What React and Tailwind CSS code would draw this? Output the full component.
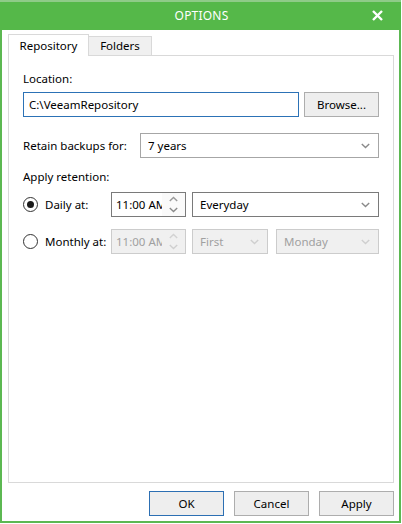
import React from "react";

const Chevron = ({ disabled }) => (
  <svg width="9" height="6" viewBox="0 0 9 6" className="shrink-0">
    <path d="M0.8 1l3.7 3.6L8.2 1" fill="none" stroke={disabled ? "#cfcfcf" : "#8a8a8a"} strokeWidth="1.4" />
  </svg>
);

const Up = ({ disabled }) => (
  <svg width="9" height="6" viewBox="0 0 9 6">
    <path d="M0.8 5l3.7-3.6L8.2 5" fill="none" stroke={disabled ? "#d2d2d2" : "#9a9a9a"} strokeWidth="1.4" />
  </svg>
);

function Select({ text, w, disabled, dark }) {
  return (
    <div
      className={`h-[25px] ${w} flex items-center justify-between pl-[7px] pr-[8px] border ${
        disabled ? "bg-[#f0f0f0] border-[#cccccc] text-[#a0a0a0]" : dark ? "bg-white border-[#7a7a7a] text-black" : "bg-white border-[#a6a6a6] text-black"
      }`}
    >
      <span>{text}</span>
      <Chevron disabled={disabled} />
    </div>
  );
}

function TimeBox({ disabled }) {
  return (
    <div
      className={`h-[25px] w-[75px] flex border ${
        disabled ? "bg-[#f0f0f0] border-[#cccccc] text-[#a0a0a0]" : "bg-white border-[#7a7a7a] text-black"
      }`}
    >
      <div className="w-[50px] overflow-hidden whitespace-nowrap pl-[4px] flex items-center">11:00 AM</div>
      <div className={`flex-1 flex flex-col items-center justify-center ${disabled ? "" : "bg-[#fafafa]"}`}>
        <div className="h-[11px] flex items-center"><Up disabled={disabled} /></div>
        <div className="h-[11px] flex items-center"><Chevron disabled={disabled} /></div>
      </div>
    </div>
  );
}

function Radio({ checked }) {
  return (
    <div className="w-[15px] h-[15px] rounded-full border border-[#333333] bg-white flex items-center justify-center shrink-0">
      {checked && <div className="w-[7px] h-[7px] rounded-full bg-[#1a1a1a]" />}
    </div>
  );
}

function Button({ children, primary }) {
  return (
    <div
      className={`h-[25px] w-[75px] flex items-center justify-center bg-[#eeeeee] border ${
        primary ? "border-[#2c6fb3]" : "border-[#adadad]"
      }`}
    >
      {children}
    </div>
  );
}

export default function App() {
  return (
    <div className="w-[402px] h-[524px] bg-white font-['Noto_Sans',sans-serif] text-[11.5px] leading-[16px] text-black">
      <div className="w-[401px] h-[523px] flex flex-col border-x-2 border-b-2 border-[#5cb852]">
        <div className="h-[2px] bg-[#8fcb88] -mx-[2px]" />
        <div className="h-[28px] bg-[#55b849] -mx-[2px] relative flex items-center justify-center text-white text-[12px] tracking-[0.2px]">
          <span className="ml-[2px]">OPTIONS</span>
          <svg className="absolute left-[372px] top-[8px]" width="11" height="11" viewBox="0 0 11 11">
            <path d="M1 1l9 9M10 1l-9 9" stroke="white" strokeWidth="2.4" />
          </svg>
        </div>
        <div className="flex-1 flex flex-col pt-[4px] pl-[6px]">
          <div className="h-[21px] flex items-end">
            <div className="h-[22px] -mb-px relative z-10 bg-white border border-b-0 border-[#d9d9d9] px-[8px] pt-[3px] w-[81px] text-center">
              Repository
            </div>
            <div className="h-[19px] bg-[#f0f0f0] border border-l-0 border-b-0 border-[#d9d9d9] w-[63px] text-center pt-[1px]">
              Folders
            </div>
          </div>
          <div className="w-[386px] h-[428px] border border-[#d9d9d9] pl-[14px] pr-[13px] pt-[15px]">
            <div>Location:</div>
            <div className="flex gap-[5px] mt-[5px]">
              <div className="h-[25px] w-[276px] border border-[#2c72b6] flex items-center pl-[5px]">C:\VeeamRepository</div>
              <Button>Browse...</Button>
            </div>
            <div className="flex items-center mt-[16px]">
              <div className="w-[117px]">Retain backups for:</div>
              <Select text="7 years" w="w-[239px]" />
            </div>
            <div className="mt-[11px]">Apply retention:</div>
            <div className="flex items-center mt-[7px]">
              <Radio checked />
              <div className="w-[73px] pl-[7px]">Daily at:</div>
              <TimeBox />
              <div className="w-[6px]" />
              <Select text="Everyday" w="w-[187px]" dark />
            </div>
            <div className="flex items-center mt-[12px]">
              <Radio />
              <div className="w-[73px] pl-[7px]">Monthly at:</div>
              <TimeBox disabled />
              <div className="w-[6px]" />
              <Select text="First" w="w-[76px]" disabled />
              <div className="w-[8px]" />
              <Select text="Monday" w="w-[103px]" disabled />
            </div>
          </div>
          <div className="flex mt-[8px] pl-[141px] gap-[10px]">
            <Button primary>OK</Button>
            <Button>Cancel</Button>
            <Button>Apply</Button>
          </div>
        </div>
      </div>
    </div>
  );
}
